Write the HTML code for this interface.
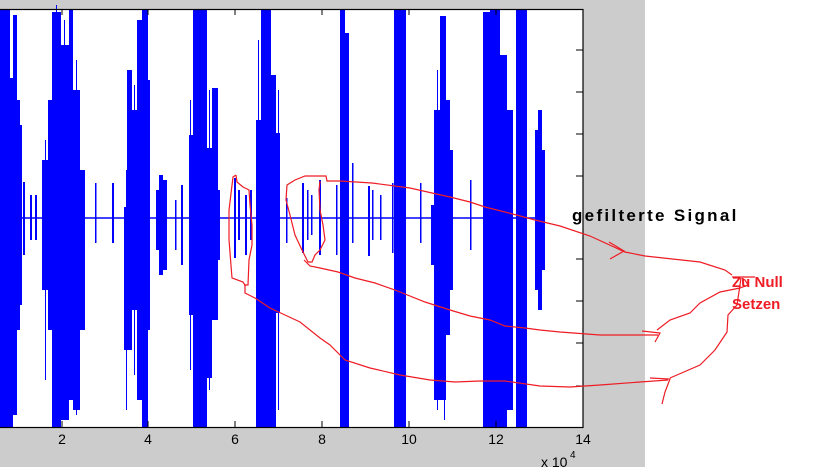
<!DOCTYPE html>
<html><head><meta charset="utf-8"><style>
html,body{margin:0;padding:0;background:#fff;}
body{width:819px;height:467px;overflow:hidden;position:relative;}
svg{position:absolute;left:0;top:0;}
</style></head><body>
<svg width="819" height="467" viewBox="0 0 819 467" xmlns="http://www.w3.org/2000/svg">
<rect x="0" y="0" width="645" height="467" fill="#cccccc"/>
<rect x="0" y="9.5" width="583" height="418" fill="#fff"/>
<g fill="#0000ff">
<!-- A -->
<rect x="0" y="10" width="10" height="417"/><rect x="10" y="78" width="3" height="349"/><rect x="13" y="15" width="4" height="400"/><rect x="17" y="100" width="3" height="230"/><rect x="20" y="125" width="2" height="180"/>
<rect x="23" y="182" width="2" height="73"/><rect x="30" y="195" width="2" height="45"/><rect x="35" y="195" width="2" height="45"/>
<!-- B -->
<rect x="42" y="160" width="6" height="130"/><rect x="48" y="100" width="4" height="230"/><rect x="52" y="12" width="9" height="415"/><rect x="61" y="45" width="8" height="375"/><rect x="69" y="10" width="4" height="390"/><rect x="73" y="90" width="7" height="320"/><rect x="80" y="170" width="5" height="160"/>
<rect x="45" y="140" width="1" height="240"/><rect x="56" y="5" width="1" height="380"/><rect x="64" y="20" width="1" height="390"/><rect x="76" y="60" width="1" height="355"/>
<rect x="95" y="183" width="1.5" height="60"/><rect x="112" y="183" width="2" height="60"/>
<!-- C -->
<rect x="124" y="207" width="3" height="143"/><rect x="127" y="70" width="5" height="280"/><rect x="132" y="110" width="5" height="200"/><rect x="137" y="20" width="5" height="380"/><rect x="142" y="10" width="6" height="417"/><rect x="148" y="80" width="2" height="250"/>
<rect x="126" y="170" width="1" height="240"/><rect x="134" y="85" width="1" height="290"/>
<rect x="156" y="190" width="3" height="60"/><rect x="159" y="175" width="4" height="100"/><rect x="163" y="180" width="4" height="90"/><rect x="175" y="200" width="1.5" height="50"/><rect x="181" y="185" width="2" height="80"/>
<!-- D -->
<rect x="189" y="135" width="4" height="180"/><rect x="193" y="10" width="7" height="417"/><rect x="200" y="10" width="7" height="417"/><rect x="207" y="148" width="5" height="230"/><rect x="212" y="88" width="6" height="232"/><rect x="218" y="190" width="2" height="70"/>
<rect x="190" y="100" width="1" height="270"/><rect x="209" y="90" width="1" height="300"/>
<rect x="234" y="178" width="2" height="80"/><rect x="238" y="190" width="2" height="50"/><rect x="245" y="195" width="2" height="60"/><rect x="250" y="190" width="2" height="50"/>
<!-- E -->
<rect x="256" y="120" width="5" height="307"/><rect x="261" y="10" width="5" height="417"/><rect x="266" y="10" width="5" height="417"/><rect x="271" y="75" width="5" height="352"/><rect x="276" y="133" width="4" height="180"/>
<rect x="258" y="40" width="1" height="387"/><rect x="278" y="90" width="1" height="320"/>
<rect x="286" y="198" width="1.5" height="45"/><rect x="302" y="183" width="2" height="70"/><rect x="307" y="190" width="1.5" height="50"/><rect x="311" y="195" width="1.5" height="40"/><rect x="319" y="180" width="2" height="75"/><rect x="336" y="185" width="1.5" height="70"/>
<!-- F -->
<rect x="340" y="10" width="5" height="417"/><rect x="345" y="33" width="4" height="394"/>
<rect x="352" y="163" width="1.5" height="80"/><rect x="368" y="186" width="2" height="70"/><rect x="372" y="190" width="1.5" height="50"/><rect x="380" y="195" width="1.5" height="45"/><rect x="392" y="183" width="1.5" height="70"/>
<!-- G -->
<rect x="394" y="10" width="12" height="417"/>
<rect x="420" y="183" width="1.5" height="60"/>
<!-- H -->
<rect x="431" y="205" width="3" height="60"/><rect x="434" y="110" width="6" height="290"/><rect x="440" y="16" width="6" height="384"/><rect x="446" y="100" width="4" height="235"/><rect x="450" y="150" width="3" height="140"/>
<rect x="437" y="70" width="1" height="340"/><rect x="444" y="40" width="1" height="380"/>
<rect x="470" y="180" width="1.5" height="70"/>
<!-- I -->
<rect x="483" y="12" width="7" height="415"/><rect x="490" y="10" width="10" height="417"/><rect x="500" y="55" width="7" height="372"/><rect x="507" y="110" width="6" height="300"/>
<!-- J -->
<rect x="516" y="10" width="11" height="417"/>
<!-- K -->
<rect x="535" y="130" width="3" height="160"/><rect x="538" y="110" width="4" height="200"/><rect x="542" y="150" width="3" height="120"/>
</g>
<line x1="0" y1="218" x2="543" y2="218" stroke="#0000ff" stroke-width="1.5"/>
<rect x="-1" y="9.5" width="584" height="418" fill="none" stroke="#000" stroke-width="1.2"/>
<g stroke="#000" stroke-width="1">
<line x1="62" y1="427" x2="62" y2="421"/><line x1="148" y1="427" x2="148" y2="421"/><line x1="235" y1="427" x2="235" y2="421"/><line x1="322" y1="427" x2="322" y2="421"/><line x1="409" y1="427" x2="409" y2="421"/><line x1="496" y1="427" x2="496" y2="421"/>
<line x1="62" y1="10" x2="62" y2="15"/><line x1="148" y1="10" x2="148" y2="15"/><line x1="235" y1="10" x2="235" y2="15"/><line x1="322" y1="10" x2="322" y2="15"/><line x1="409" y1="10" x2="409" y2="15"/><line x1="496" y1="10" x2="496" y2="15"/>
<line x1="576" y1="50" x2="583" y2="50"/><line x1="576" y1="92" x2="583" y2="92"/><line x1="576" y1="134" x2="583" y2="134"/><line x1="576" y1="176" x2="583" y2="176"/><line x1="576" y1="259" x2="583" y2="259"/><line x1="576" y1="301" x2="583" y2="301"/><line x1="576" y1="343" x2="583" y2="343"/><line x1="576" y1="386" x2="583" y2="386"/>
</g>
<g font-family="Liberation Sans, sans-serif" font-size="14" fill="#000" text-anchor="middle">
<text x="62" y="444">2</text><text x="148" y="444">4</text><text x="235" y="444">6</text><text x="322" y="444">8</text><text x="409" y="444">10</text><text x="496" y="444">12</text><text x="583" y="444">14</text>
</g>
<text x="541" y="467" font-family="Liberation Sans, sans-serif" font-size="14" fill="#000">x 10</text>
<text x="570" y="458" font-family="Liberation Sans, sans-serif" font-size="10" fill="#000">4</text>
<text x="572" y="221" font-family="Liberation Sans, sans-serif" font-size="17" font-weight="bold" letter-spacing="2.3" fill="#000">gefilterte Signal</text>
<text x="732" y="287" font-family="Liberation Sans, sans-serif" font-size="15" font-weight="bold" fill="#ee1c24">Zu Null</text>
<text x="732" y="309" font-family="Liberation Sans, sans-serif" font-size="15" font-weight="bold" fill="#ee1c24">Setzen</text>
<g fill="none" stroke="#ee1c24" stroke-width="1.2">
<path d="M236,175 L233,177 L229,210 L229,240 L232,278 L243,282 L245,285 L245,293 L255,298 L270,308 L285,315 L300,322 L320,338 L330,345 L345,360 L370,368 L400,375 L430,380 L455,382 L480,381 L505,381 L540,386 L570,387 L600,385 L640,382 L668,380"/>
<path d="M236,175 L237,182 L243,187 L249,190 L250,205 L252,225 L252,245 L249,260 L248,285 L244,285"/>
<path d="M320,181 L319,190 L320,210 L323,225 L325,240 L320,250 L315,255 L312,262 L308,262 L302,250 L295,235 L290,215 L286,200 L287,185 L295,180 L305,176 L326,176 L327,181 L340,181 L372,183 L410,188 L432,193 L450,197 L470,202 L485,207 L505,212 L535,220 L560,226 L590,236 L625,252 L645,256 L700,262 L725,270 L732,275"/>
<path d="M609,242 L624,251 L610,259"/>
<path d="M304,260 L310,266 L320,268 L338,272 L355,278 L375,283 L395,290 L425,302 L450,310 L470,316 L490,320 L505,326 L525,328 L540,330 L560,332 L600,335 L658,335"/>
<path d="M642,331 L660,333 L655,342"/>
<path d="M657,330 L670,320 L690,313 L700,303 L720,292 L740,288 L748,285 L745,280 L742,278"/>
<path d="M650,378 L670,379 L665,392 L662,404"/>
<path d="M670,378 L700,365 L715,350 L727,332 L728,315 L737,305 L740,285 L741,278"/>
<path d="M732,277 L755,277"/>
</g>
</svg>
</body></html>
